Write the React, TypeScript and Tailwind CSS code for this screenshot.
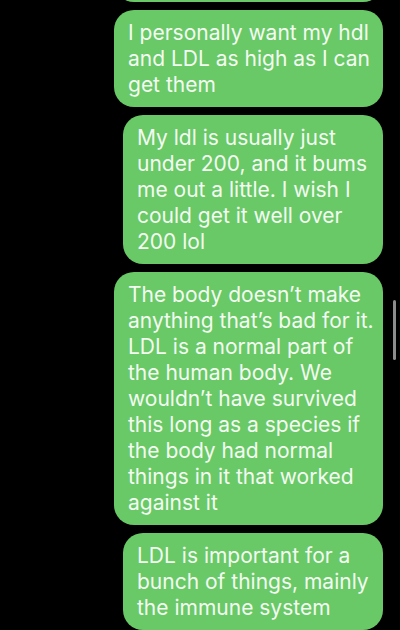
import React from "react";

const bubbles: { lines: string[]; w: string }[] = [
  { lines: ["I personally want my hdl", "and LDL as high as I can", "get them"], w: "w-[269px]" },
  {
    lines: ["My ldl is usually just", "under 200, and it bums", "me out a little. I wish I", "could get it well over", "200 lol"],
    w: "w-[260px]",
  },
  {
    lines: [
      "The body doesn\u2019t make",
      "anything that\u2019s bad for it.",
      "LDL is a normal part of",
      "the human body. We",
      "wouldn\u2019t have survived",
      "this long as a species if",
      "the body had normal",
      "things in it that worked",
      "against it",
    ],
    w: "w-[269px]",
  },
  { lines: ["LDL is important for a", "bunch of things, mainly", "the immune system"], w: "w-[260px]" },
];

export default function App() {
  return (
    <div
      className="relative w-[400px] h-[630px] overflow-hidden bg-black"
      style={{ fontFamily: "Inter, 'Noto Sans', sans-serif" }}
    >
      <div className="flex flex-col items-end gap-2 pr-[17px]">
        <div className="mt-[-38px] h-[40px] w-[269px] rounded-[20px] bg-[#68c966]" />
        {bubbles.map((b, i) => (
          <div
            key={i}
            className={`${b.w} rounded-[20px] bg-[#68c966] pl-[14px] pr-2 pt-[10px] pb-[9px] text-[21px] leading-[26px] text-[#f4fbf2] whitespace-nowrap`}
          >
            {b.lines.map((l, j) => (
              <div key={j}>{l}</div>
            ))}
          </div>
        ))}
      </div>
      <div className="absolute left-[393px] top-[300px] h-[60px] w-[3px] rounded-full bg-[#8c8c8c]" />
    </div>
  );
}
